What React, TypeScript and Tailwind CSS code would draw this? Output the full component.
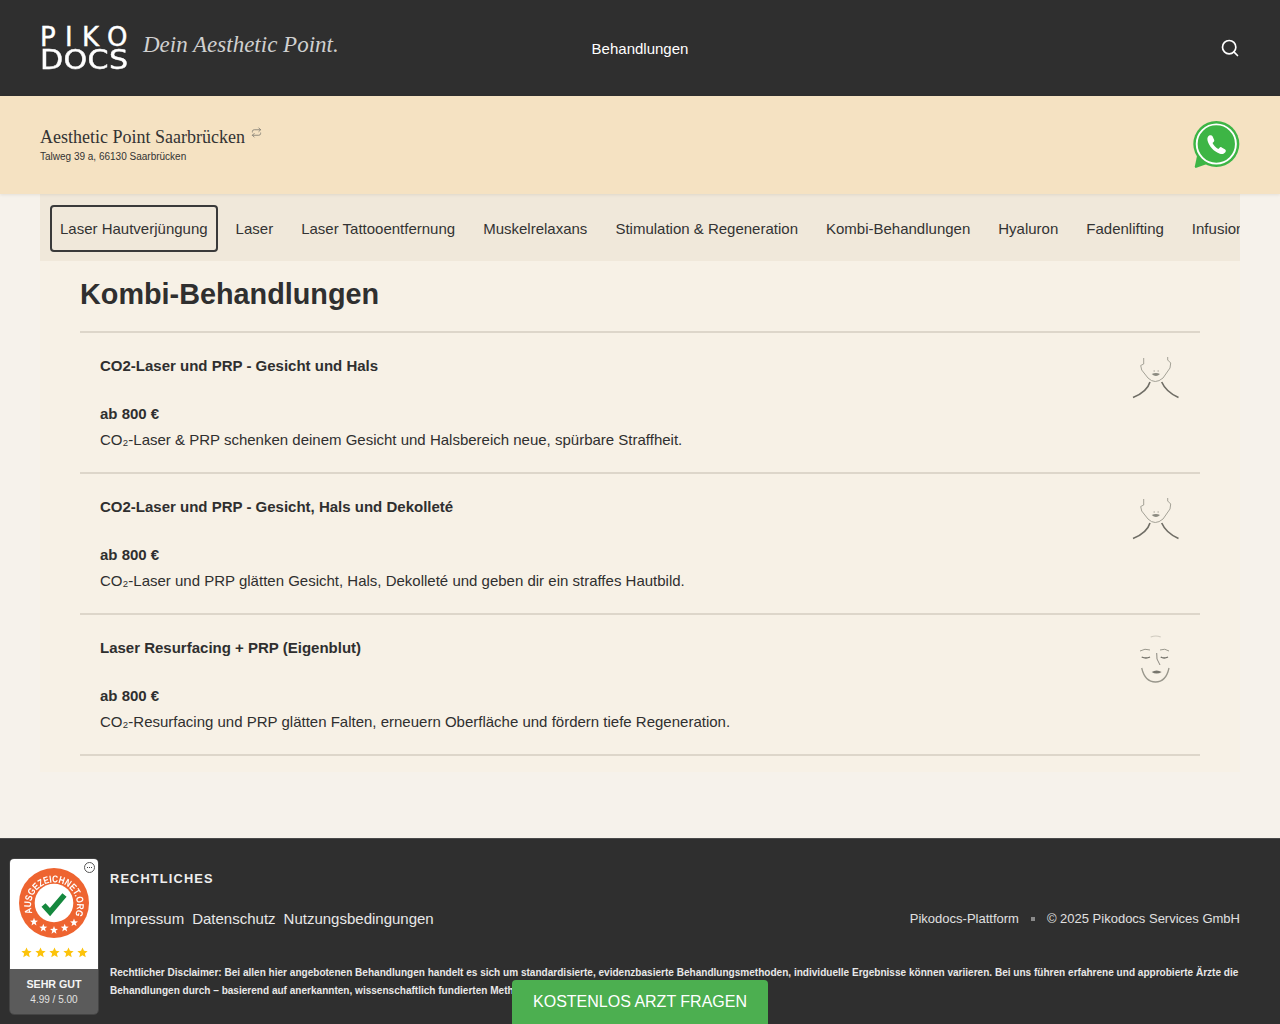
import React from "react";
import { Search, Repeat } from "lucide-react";

const tabs = ["Laser Hautverjüngung","Laser","Laser Tattooentfernung","Muskelrelaxans","Stimulation & Regeneration","Kombi-Behandlungen","Hyaluron","Fadenlifting","Infusionen"];

function Neck() {
  return (
    <svg viewBox="0 0 48 48" className="w-[48px] h-[48px] blur-[0.3px]" fill="none" stroke="#a3a196">
      <path d="M11.7 5 L11.7 11 L8.7 12.5 L9.7 17 L16 25 Q23 32 31 25 L38 15 L38.7 10 L35.7 7 L35.7 4" strokeWidth="1" />
      <path d="M18 29 Q15 39 1 44.5" strokeWidth="1.6" stroke="#6f6d65" />
      <path d="M29.7 29 Q34 39 46.5 44.5" strokeWidth="1.6" stroke="#6f6d65" />
      <path d="M19.7 21 Q24 19 28 21 Q24 25 19.7 21Z" fill="#8b8a80" stroke="none" />
      <path d="M21.5 18h1.4M25.5 18h1.4" strokeWidth="1.1" />
    </svg>
  );
}

function Face() {
  return (
    <svg viewBox="0 0 48 48" className="w-[48px] h-[48px] blur-[0.3px]" fill="none" stroke="#6f6d65">
      <path d="M18.7 2 Q24 0 28.7 2" stroke="#cfcabf" strokeWidth="1.2" />
      <path d="M8 16 Q13 13 18 15M28 15 Q33 13 37 16" strokeWidth="1" stroke="#99978c" />
      <path d="M9.7 22 Q14 24 18 22M28.7 22 Q32 24 36 22" strokeWidth="1.3" />
      <path d="M24.7 18 L25 24 L28 30" strokeWidth="0.8" />
      <path d="M19.7 37 Q24.5 34 29.7 37 Q24.5 40 19.7 37Z" fill="#77756c" stroke="none" />
      <path d="M9.7 33 Q13 47 23.5 47 Q34 47 37 33" strokeWidth="1.3" stroke="#99978c" />
    </svg>
  );
}

function WhatsApp() {
  return (
    <svg viewBox="0 0 48 48" className="w-[48px] h-[48px]">
      <path d="M5 35 L2.8 45.6 Q2.8 47.2 4.4 46.8 L15 43 Z" fill="#3db545" />
      <circle cx="24.3" cy="23" r="23" fill="#3db545" />
      <circle cx="24.3" cy="23" r="19.6" fill="none" stroke="#fff" strokeWidth="1.9" />
      <g transform="translate(24.3 23.6) scale(0.88) translate(-24.5 -23)">
        <path d="M17 12.5 C15 13.5 13.8 15.8 14.6 18.6 C16.2 24.8 21.8 31 28.6 33.4 C31.6 34.4 34.4 33 35.2 30.8 C35.6 29.6 35.2 28.8 34.2 28.2 L30.6 26.2 C29.6 25.6 28.8 25.8 28 26.8 L26.8 28 C24.4 27 21.4 23.8 20.2 21.2 L21.4 20 C22.2 19.2 22.4 18.4 22 17.4 L20.2 13.6 C19.6 12.4 18.4 12 17 12.5Z" fill="#fff" />
      </g>
    </svg>
  );
}

function Seal() {
  const star = (x: number, y: number, r: number, c: string) => {
    const pts: string[] = [];
    for (let i = 0; i < 10; i++) {
      const a = -Math.PI / 2 + (i * Math.PI) / 5;
      const q = i % 2 === 0 ? r : r * 0.42;
      pts.push(`${x + q * Math.cos(a)},${y + q * Math.sin(a)}`);
    }
    return <polygon key={`${x}-${y}`} points={pts.join(" ")} fill={c} />;
  };
  return (
    <svg viewBox="0 0 70 70" className="w-[70px] h-[70px]">
      <defs>
        <path id="sealArc" d="M13.3 45.1 A23 23 0 1 1 56.7 45.1" />
      </defs>
      <circle cx="35" cy="35" r="35" fill="#ee6430" />
      <circle cx="35" cy="35" r="19.3" fill="#fff" />
      <text fontFamily="'Liberation Sans', sans-serif" fontSize="10" fontWeight="bold" fill="#fff">
        <textPath href="#sealArc" textLength={90} lengthAdjust="spacingAndGlyphs">AUSGEZEICHNET.ORG</textPath>
      </text>
      {star(15, 54, 4.2, "#fff")}{star(24.3, 60, 4.2, "#fff")}{star(35, 62.3, 4.2, "#fff")}{star(45.7, 60, 4.2, "#fff")}{star(55, 54.7, 4.2, "#fff")}
      <path d="M24.5 37 L31 44 L45.5 27" fill="none" stroke="#15883e" strokeWidth="5.5" />
    </svg>
  );
}

function Badge() {
  const stars = [0,1,2,3,4];
  return (
    <div className="fixed left-[9px] top-[858px] w-[90px] h-[157px] rounded-[5px] overflow-hidden border border-[#444] flex flex-col font-['Liberation_Sans',sans-serif]">
      <div className="relative bg-white h-[110px] flex flex-col items-center pt-[9px]">
        <div className="absolute right-[3px] top-[3px] w-[11px] h-[11px] rounded-full border border-[#555] flex items-center justify-center gap-[1px]">
          <div className="w-[1px] h-[1px] bg-[#444]" />
          <div className="w-[1px] h-[1px] bg-[#444]" />
          <div className="w-[1px] h-[1px] bg-[#444]" />
        </div>
        <Seal />
        <div className="flex gap-[3px] mt-[9px]">
          {stars.map((s) => (
            <svg key={s} viewBox="0 0 12 12" className="w-[11px] h-[11px]">
              <polygon points="6,0.5 7.6,4.2 11.6,4.6 8.6,7.2 9.5,11.2 6,9.1 2.5,11.2 3.4,7.2 0.4,4.6 4.4,4.2" fill="#fcc30b" />
            </svg>
          ))}
        </div>
      </div>
      <div className="flex-1 bg-[#5b5b5b] flex flex-col items-center pt-[8px] text-[#f4f4f4]">
        <div className="text-[10.7px] font-bold leading-[14px]">SEHR GUT</div>
        <div className="text-[10px] leading-[14px] mt-[2px] text-[#e2e2e2]">4.99 / 5.00</div>
      </div>
    </div>
  );
}

function Row({ title, text, img }: { title: string; text: string; img: React.ReactNode }) {
  return (
    <div className="h-[141px] border-b-2 border-[#ddd6ca] px-5 pt-[21px] flex justify-between">
      <div className="text-[15px] text-[#2f2f2f]">
        <div className="font-bold leading-[24px]">{title}</div>
        <div className="font-bold leading-[24px] mt-[24px]">ab 800 €</div>
        <div className="leading-[24px] mt-[2px]">{text}</div>
      </div>
      <div className="-mt-[1px]">{img}</div>
    </div>
  );
}

export default function App() {
  return (
    <div className="h-[1024px] overflow-hidden bg-[#f6f2eb] font-['Liberation_Sans',sans-serif] text-[#2f2f2f]">
      <header className="h-[96px] bg-[#2f2f2f] px-10 grid grid-cols-[1fr_auto_1fr] items-center text-white">
        <div className="flex items-center">
          <div className="w-[89px] text-white font-['DejaVu_Sans',sans-serif] [-webkit-text-stroke:0.4px_white]">
            <div className="text-[26px] leading-[24px] tracking-[0.36em] whitespace-nowrap">PIKO</div>
            <div className="text-[26px] leading-[23px] tracking-[0.01em] scale-x-[1.16] origin-left whitespace-nowrap">DOCS</div>
          </div>
          <div className="ml-[14px] -mt-[6px] w-[198px] whitespace-nowrap font-['Liberation_Serif',serif] italic text-[23px] leading-[30px] text-[#d0d0d0]">Dein Aesthetic Point.</div>
        </div>
        <div className="text-[15px] leading-[20px] pt-[2px] text-white">Behandlungen</div>
        <div className="flex justify-end">
          <Search size={20} strokeWidth={2} className="text-white" />
        </div>
      </header>
      <div className="h-[98px] bg-[#f5e2c2] px-10 flex items-center justify-between shadow-[0_1px_3px_rgba(0,0,0,0.08)] relative">
        <div className="-mt-[1px]">
          <div className="flex items-start">
            <span className="font-['Liberation_Serif',serif] text-[18px] leading-[24px] text-[#333]">Aesthetic Point Saarbrücken</span>
            <Repeat size={11} className="ml-[6px] mt-[2px] text-[#8a8478]" />
          </div>
          <div className="text-[10px] leading-[14px] mt-[1px] text-[#333]">Talweg 39 a, 66130 Saarbrücken</div>
        </div>
        <WhatsApp />
      </div>
      <main className="px-10">
        <nav className="h-[67px] bg-[#f0e8da] px-[10px] pt-[1px] flex items-center gap-2 overflow-hidden">
          {tabs.map((t, i) => (
            <div key={t} className={`shrink-0 whitespace-nowrap text-[15px] leading-[24px] px-2 pt-[1px] h-[47px] flex items-center border-2 rounded-[4px] text-[#333] ${i === 0 ? "border-[#3a3a3a]" : "border-transparent"}`}>{t}</div>
          ))}
        </nav>
        <section className="h-[511px] bg-[#f7f1e6] px-10">
          <h2 className="text-[28.8px] font-bold leading-[36px] pt-[15px] h-[72px] border-b-2 border-[#ddd6ca] text-[#2f2f2f]">Kombi-Behandlungen</h2>
          <Row title="CO2-Laser und PRP - Gesicht und Hals" text="CO₂-Laser & PRP schenken deinem Gesicht und Halsbereich neue, spürbare Straffheit." img={<Neck />} />
          <Row title="CO2-Laser und PRP - Gesicht, Hals und Dekolleté" text="CO₂-Laser und PRP glätten Gesicht, Hals, Dekolleté und geben dir ein straffes Hautbild." img={<Neck />} />
          <Row title="Laser Resurfacing + PRP (Eigenblut)" text="CO₂-Resurfacing und PRP glätten Falten, erneuern Oberfläche und fördern tiefe Regeneration." img={<Face />} />
        </section>
      </main>
      <footer className="mt-[66px] h-[187px] bg-[#2f2f2f] border-t border-[#4a4a4a] pl-[110px] pr-10 pt-[32px] text-[#efefef]">
        <div className="text-[12.8px] font-bold tracking-[0.09em] leading-[16px]">RECHTLICHES</div>
        <div className="flex justify-between items-center mt-[22px]">
          <div className="flex gap-2 text-[15px] leading-[20px] text-[#e8e8e8]">
            <span>Impressum</span><span>Datenschutz</span><span>Nutzungsbedingungen</span>
          </div>
          <div className="flex items-center text-[13px] text-[#e0e0e0]">
            <span>Pikodocs-Plattform</span>
            <span className="w-[4px] h-[4px] bg-[#8a8a8a] mx-[12px]" />
            <span>© 2025 Pikodocs Services GmbH</span>
          </div>
        </div>
        <p className="mt-[35px] text-[10.05px] font-bold leading-[18px] text-[#e8e8e8]">Rechtlicher Disclaimer: Bei allen hier angebotenen Behandlungen handelt es sich um standardisierte, evidenzbasierte Behandlungsmethoden, individuelle Ergebnisse können variieren. Bei uns führen erfahrene und approbierte Ärzte die Behandlungen durch – basierend auf anerkannten, wissenschaftlich fundierten Methoden.</p>
      </footer>
      <Badge />
      <button className="fixed left-[512px] bottom-0 w-[256px] h-[44px] bg-[#4caf50] text-white text-[16px] leading-[24px] rounded-t-[4px] flex items-center justify-center">KOSTENLOS ARZT FRAGEN</button>
    </div>
  );
}
